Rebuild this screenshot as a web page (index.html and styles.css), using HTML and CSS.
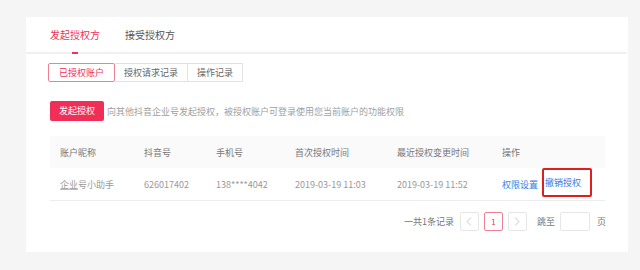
FILE: index.html
```html
<!DOCTYPE html>
<html lang="zh-CN">
<head>
    <meta charset="UTF-8">
    <title>授权管理</title>
    <link rel="stylesheet" href="styles.css">
</head>
<body>
    <div class="card">
        <div class="tabs">
            <span class="tab active">发起授权方</span>
            <span class="tab">接受授权方</span>
        </div>

        <div class="sub-tabs">
            <span class="sub-tab active">已授权账户</span>
            <span class="sub-tab">授权请求记录</span>
            <span class="sub-tab">操作记录</span>
        </div>

        <div class="action-bar">
            <button class="btn-primary">发起授权</button>
            <span class="hint">向其他抖音企业号发起授权，被授权账户可登录使用您当前账户的功能权限</span>
        </div>

        <div class="table">
            <div class="row head">
                <span>账户昵称</span>
                <span>抖音号</span>
                <span>手机号</span>
                <span>首次授权时间</span>
                <span>最近授权变更时间</span>
                <span>操作</span>
            </div>
            <div class="row">
                <span><u class="hover">企业</u>号小助手</span>
                <span>626017402</span>
                <span>138****4042</span>
                <span>2019-03-19 11:03</span>
                <span>2019-03-19 11:52</span>
                <span class="ops">
                    <a class="link">权限设置</a>
                    <a class="link marked">撤销授权</a>
                </span>
            </div>
        </div>

        <div class="pager">
            <span class="total">一共1条记录</span>
            <span class="page-btn disabled">
                <svg width="6" height="9" viewBox="0 0 6 9"><path d="M5 0.5 L1 4.5 L5 8.5" fill="none" stroke="#c8c8c8" stroke-width="1"/></svg>
            </span>
            <span class="page-btn current">1</span>
            <span class="page-btn disabled">
                <svg width="6" height="9" viewBox="0 0 6 9"><path d="M1 0.5 L5 4.5 L1 8.5" fill="none" stroke="#c8c8c8" stroke-width="1"/></svg>
            </span>
            <span class="jump">跳至</span>
            <input class="jump-input" type="text">
            <span class="unit">页</span>
        </div>
    </div>
</body>
</html>
```

FILE: styles.css
```css
body {
    margin: 0;
    background-color: #f5f5f5;
    font-family: "Noto Sans CJK SC", "Noto Sans", sans-serif;
    color: #333;
}
.card {
    margin: 17px 0 0 26px;
    width: 557px;
    height: 235px;
    padding: 0 23px 0 22px;
    background-color: #ffffff;
}
.tabs {
    height: 35px;
    margin: 0 -22px 0 -22px;
    padding-left: 24px;
    border-bottom: 2px solid #f0f0f0;
    display: flex;
    align-items: flex-end;
}
.tab {
    position: relative;
    font-size: 10px;
    line-height: 14px;
    padding-bottom: 10px;
    margin-right: 25px;
    color: #555;
}
.tab.active {
    color: #f0305a;
}
.tab.active::after {
    content: "";
    position: absolute;
    left: 50%;
    bottom: -2px;
    width: 6px;
    height: 2px;
    margin-left: -3px;
    background-color: #f0305a;
}
.sub-tabs {
    margin-top: 9px;
    display: flex;
}
.sub-tab {
    height: 17px;
    line-height: 17px;
    font-size: 9px;
    padding: 0 9px;
    border: 1px solid #e2e2e2;
    border-left: none;
    color: #666;
}
.sub-tab:first-child {
    border-left: 1px solid #e2e2e2;
}
.sub-tab.active {
    padding: 0 10px;
    border: 1px solid #ef7f95;
    border-radius: 2px;
    color: #f0305a;
}
.action-bar {
    margin-top: 19px;
    margin-left: 2px;
    display: flex;
    align-items: center;
}
.btn-primary {
    height: 20px;
    padding: 0 9px;
    border: none;
    border-radius: 2px;
    background-color: #ef2f57;
    color: #ffffff;
    font-family: inherit;
    font-size: 9px;
    line-height: 20px;
}
.hint {
    margin-left: 3px;
    font-size: 9px;
    color: #a0a0a0;
}
.table {
    margin: 15px 0 0 2px;
    width: 555px;
}
.row {
    display: grid;
    grid-template-columns: 84px 72px 79px 102px 105px 1fr;
    height: 32px;
    align-items: center;
    border-bottom: 1px solid #ececec;
    font-size: 9px;
    color: #999;
}
.row span {
    padding-left: 10px;
}
.row.head {
    height: 32px;
    border-bottom: none;
    background-color: #fafafa;
    color: #777;
}
.hover {
    text-decoration: underline;
    text-decoration-color: #bbb;
}
.ops {
    display: flex;
    align-items: center;
}
.link {
    color: #3a7be0;
    cursor: pointer;
}
.marked {
    margin: 0 0 3px 4px;
    height: 25px;
    line-height: 25px;
    padding: 0 9px 0 1px;
    border: 2px solid #e01e1e;
    border-radius: 2px;
}
.pager {
    margin-top: 11px;
    margin-right: -1px;
    display: flex;
    justify-content: flex-end;
    align-items: center;
    font-size: 9px;
    color: #777;
}
.total {
    margin-right: 6px;
}
.page-btn {
    width: 17px;
    height: 17px;
    margin-right: 5px;
    border: 1px solid #e6e6e6;
    border-radius: 2px;
    display: flex;
    justify-content: center;
    align-items: center;
    font-size: 8px;
}
.page-btn.current {
    border-color: #ef7f95;
    color: #f0305a;
}
.jump {
    margin-left: 5px;
    margin-right: 5px;
}
.jump-input {
    width: 28px;
    height: 17px;
    padding: 0;
    border: 1px solid #e6e6e6;
    border-radius: 2px;
}
.unit {
    margin-left: 7px;
}
```
